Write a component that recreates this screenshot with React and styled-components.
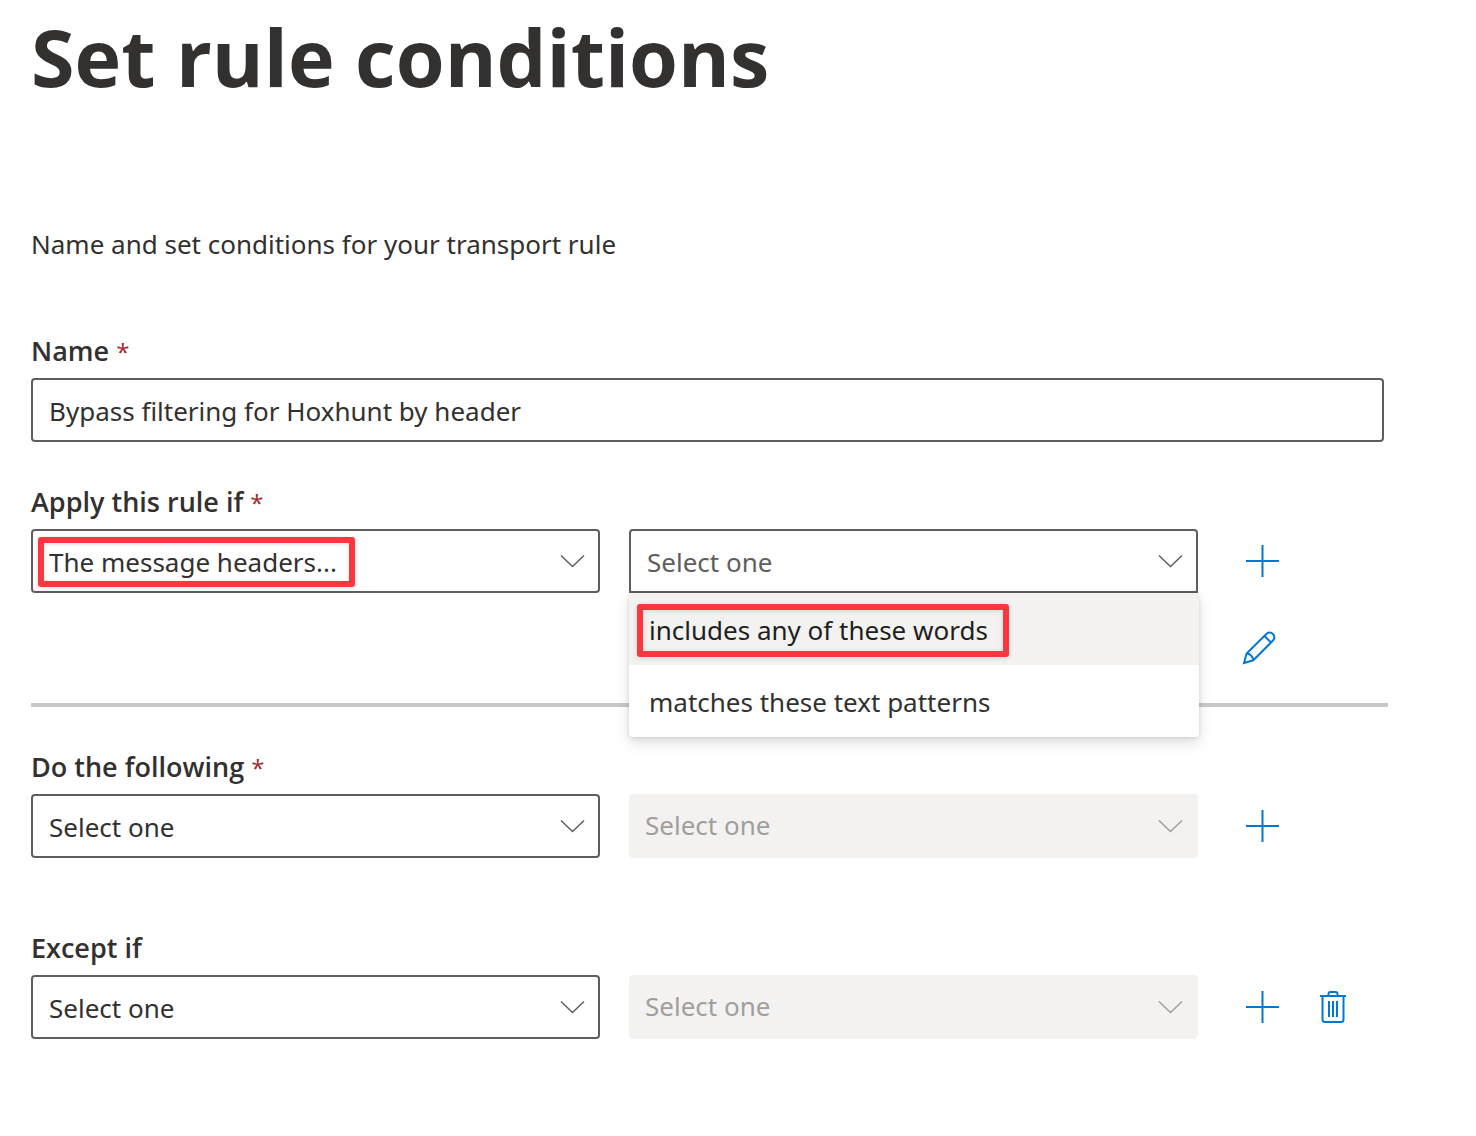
import { useState } from 'react';
import styled, { createGlobalStyle } from 'styled-components';

const GlobalStyle = createGlobalStyle`
  * {
    box-sizing: border-box;
  }

  body {
    margin: 0;
    background-color: #ffffff;
    color: #323130;
    font-family: "Noto Sans", "Open Sans", sans-serif;
    font-size: 26px;
    line-height: 36px;
  }

  button, input, select {
    font: inherit;
    color: inherit;
  }
`

const Page = styled.main`
  padding: 9px 88px 96px 31px;
`

const Title = styled.h1`
  margin: 0;
  font-family: "Open Sans", "Noto Sans", sans-serif;
  font-size: 79px;
  line-height: 96px;
  font-weight: 700;
`

const Description = styled.p`
  margin: 121px 0 71px;
`

const Section = styled.section`
  display: flex;
  flex-direction: column;
  margin-top: ${props => props.$gap || 0}px;
`

const Label = styled.label`
  margin-bottom: 9px;
  font-family: "Open Sans", "Noto Sans", sans-serif;
  font-size: 27px;
  font-weight: 600;
`

const Required = styled.span`
  color: #a4262c;
  font-size: 24px;
  line-height: 24px;
  font-weight: 400;
`

const NameInput = styled.input`
  height: 64px;
  margin-right: 4px;
  padding: 1px 16px 0;
  border: 2px solid #605e5c;
  border-radius: 4px;
  background-color: white;

  &:focus {
    outline: none;
  }
`

const Row = styled.div`
  display: grid;
  grid-template-columns: 1fr 1fr 161px;
  column-gap: 29px;
`

const Field = styled.div`
  position: relative;
  display: flex;
  align-items: center;
  height: 64px;
`

const Select = styled.select`
  appearance: none;
  width: 100%;
  height: 100%;
  padding: 1px 56px 0 16px;
  border: 2px solid #605e5c;
  border-radius: ${props => props.$open ? "4px 4px 0 0" : "4px"};
  background-color: white;
  color: ${props => props.$open ? "#605e5c" : "#323130"};
  cursor: pointer;

  &:disabled {
    padding: 0 56px 2px 14px;
    border-color: #f3f2f1;
    background-color: #f3f2f1;
    color: #a19f9d;
    opacity: 1;
    cursor: default;
  }
`

const Chevron = styled.svg`
  position: absolute;
  right: 15px;
  width: 25px;
  height: 14px;
  fill: none;
  stroke: ${props => props.$disabled ? "#a19f9d" : "#605e5c"};
  stroke-width: 1.5;
  pointer-events: none;
`

const Marker = styled.span`
  position: absolute;
  inset: 8px auto 6px 7px;
  width: 317px;
  border: 6px solid #fb3640;
  border-radius: 3px;
  box-shadow: 0 1px 5px rgba(0,0,0,0.15), inset 0 1px 5px rgba(0,0,0,0.12);
  pointer-events: none;
`

const Menu = styled.ul`
  position: absolute;
  top: 100%;
  left: 0;
  right: -1px;
  z-index: 2;
  margin: 0;
  padding: 0;
  list-style: none;
  background-color: white;
  border-radius: 0 0 4px 4px;
  box-shadow: 0 6px 14px rgba(0,0,0,0.13), 0 1px 4px rgba(0,0,0,0.11);
`

const Option = styled.button`
  position: relative;
  display: block;
  width: 100%;
  height: 72px;
  padding: 1px 20px 0;
  border: none;
  border-radius: inherit;
  background-color: ${props => props.$active ? "#f3f2f1" : "transparent"};
  color: ${props => props.$active ? "#201f1e" : "#323130"};
  text-align: left;
  cursor: pointer;
`

const OptionMarker = styled(Marker)`
  inset: 11px auto 8px 8px;
  width: 372px;
`

const Actions = styled.div`
  display: flex;
  flex-wrap: wrap;
  align-content: flex-start;
`

const IconButton = styled.button`
  display: flex;
  justify-content: center;
  align-items: center;
  width: 70px;
  height: 64px;
  padding: 0;
  border: none;
  background-color: transparent;
  color: #0078d4;
  cursor: pointer;
`

const EditButton = styled(IconButton)`
  height: 110px;
  margin-right: 70px;
  padding-right: 6px;
`

const Icon = styled.svg`
  width: 34px;
  height: 34px;
  fill: none;
  stroke: currentColor;
  stroke-width: 2;
`

const Divider = styled.hr`
  width: 100%;
  height: 4px;
  margin: 0;
  border: none;
  background-color: #c8c8c8;
`

const PlusIcon = () => (
  <Icon viewBox="0 0 34 34">
    <path d="M1 17H34M17.500 1V33" />
  </Icon>
)

const PencilIcon = () => (
  <Icon viewBox="0 0 34 34">
    <path d="M2 32L4.600 22.500L24.600 2.800C29 -0.600 34.600 4.600 31.200 9.300L11.300 29.300ZM22.500 5L29 11.500M4.600 22.500C8 22.500 11 25.500 11.300 29.300" />
  </Icon>
)

const TrashIcon = () => (
  <Icon viewBox="0 0 34 34">
    <path d="M5 6H31M13.500 6V4Q13.500 2 15.500 2H20.500Q22.500 2 22.500 4V6M7.500 6V29.500Q7.500 32 10 32H26Q28.500 32 28.500 29.500V6M14 11V27M18 11V27M22 11V27" />
  </Icon>
)

const Dropdown = ({ id, label, value = "Select one", disabled, open, children }) => (
  <Field>
    <Select id={id} aria-label={label} disabled={disabled} $open={open}>
      <option>{value}</option>
    </Select>
    <Chevron viewBox="0 0 25 14" $disabled={disabled}>
      <path d="M1 1.500L12.500 12.500L24 1.500" />
    </Chevron>
    {children}
  </Field>
)

const operators = ["includes any of these words", "matches these text patterns"]

const App = () => {

  const [ name, setName ] = useState("Bypass filtering for Hoxhunt by header")
  const [ active, setActive ] = useState(0)

  return (
    <Page>
      <GlobalStyle />
      <Title>Set rule conditions</Title>
      <Description>Name and set conditions for your transport rule</Description>

      <Section>
        <Label htmlFor="name">Name <Required>*</Required></Label>
        <NameInput id="name" value={name} onChange={e => setName(e.target.value)} />
      </Section>

      <Section $gap={42}>
        <Label htmlFor="condition">Apply this rule if <Required>*</Required></Label>
        <Row>
          <Dropdown id="condition" value="The message headers...">
            <Marker />
          </Dropdown>
          <Dropdown label="Condition operator" open>
            <Menu role="listbox">
              {operators.map((text, i) => (
                <li key={text} role="presentation">
                  <Option role="option" aria-selected={i === active} $active={i === active} onMouseEnter={() => setActive(i)}>
                    {text}
                    {i === 0 && <OptionMarker />}
                  </Option>
                </li>
              ))}
            </Menu>
          </Dropdown>
          <Actions>
            <IconButton aria-label="Add condition"><PlusIcon /></IconButton>
            <EditButton aria-label="Edit condition"><PencilIcon /></EditButton>
          </Actions>
        </Row>
        <Divider />
      </Section>

      <Section $gap={42}>
        <Label htmlFor="action">Do the following <Required>*</Required></Label>
        <Row>
          <Dropdown id="action" />
          <Dropdown label="Action details" disabled />
          <Actions>
            <IconButton aria-label="Add action"><PlusIcon /></IconButton>
          </Actions>
        </Row>
      </Section>

      <Section $gap={72}>
        <Label htmlFor="exception">Except if</Label>
        <Row>
          <Dropdown id="exception" />
          <Dropdown label="Exception details" disabled />
          <Actions>
            <IconButton aria-label="Add exception"><PlusIcon /></IconButton>
            <IconButton aria-label="Delete exception"><TrashIcon /></IconButton>
          </Actions>
        </Row>
      </Section>
    </Page>
  )
}

export default App;
